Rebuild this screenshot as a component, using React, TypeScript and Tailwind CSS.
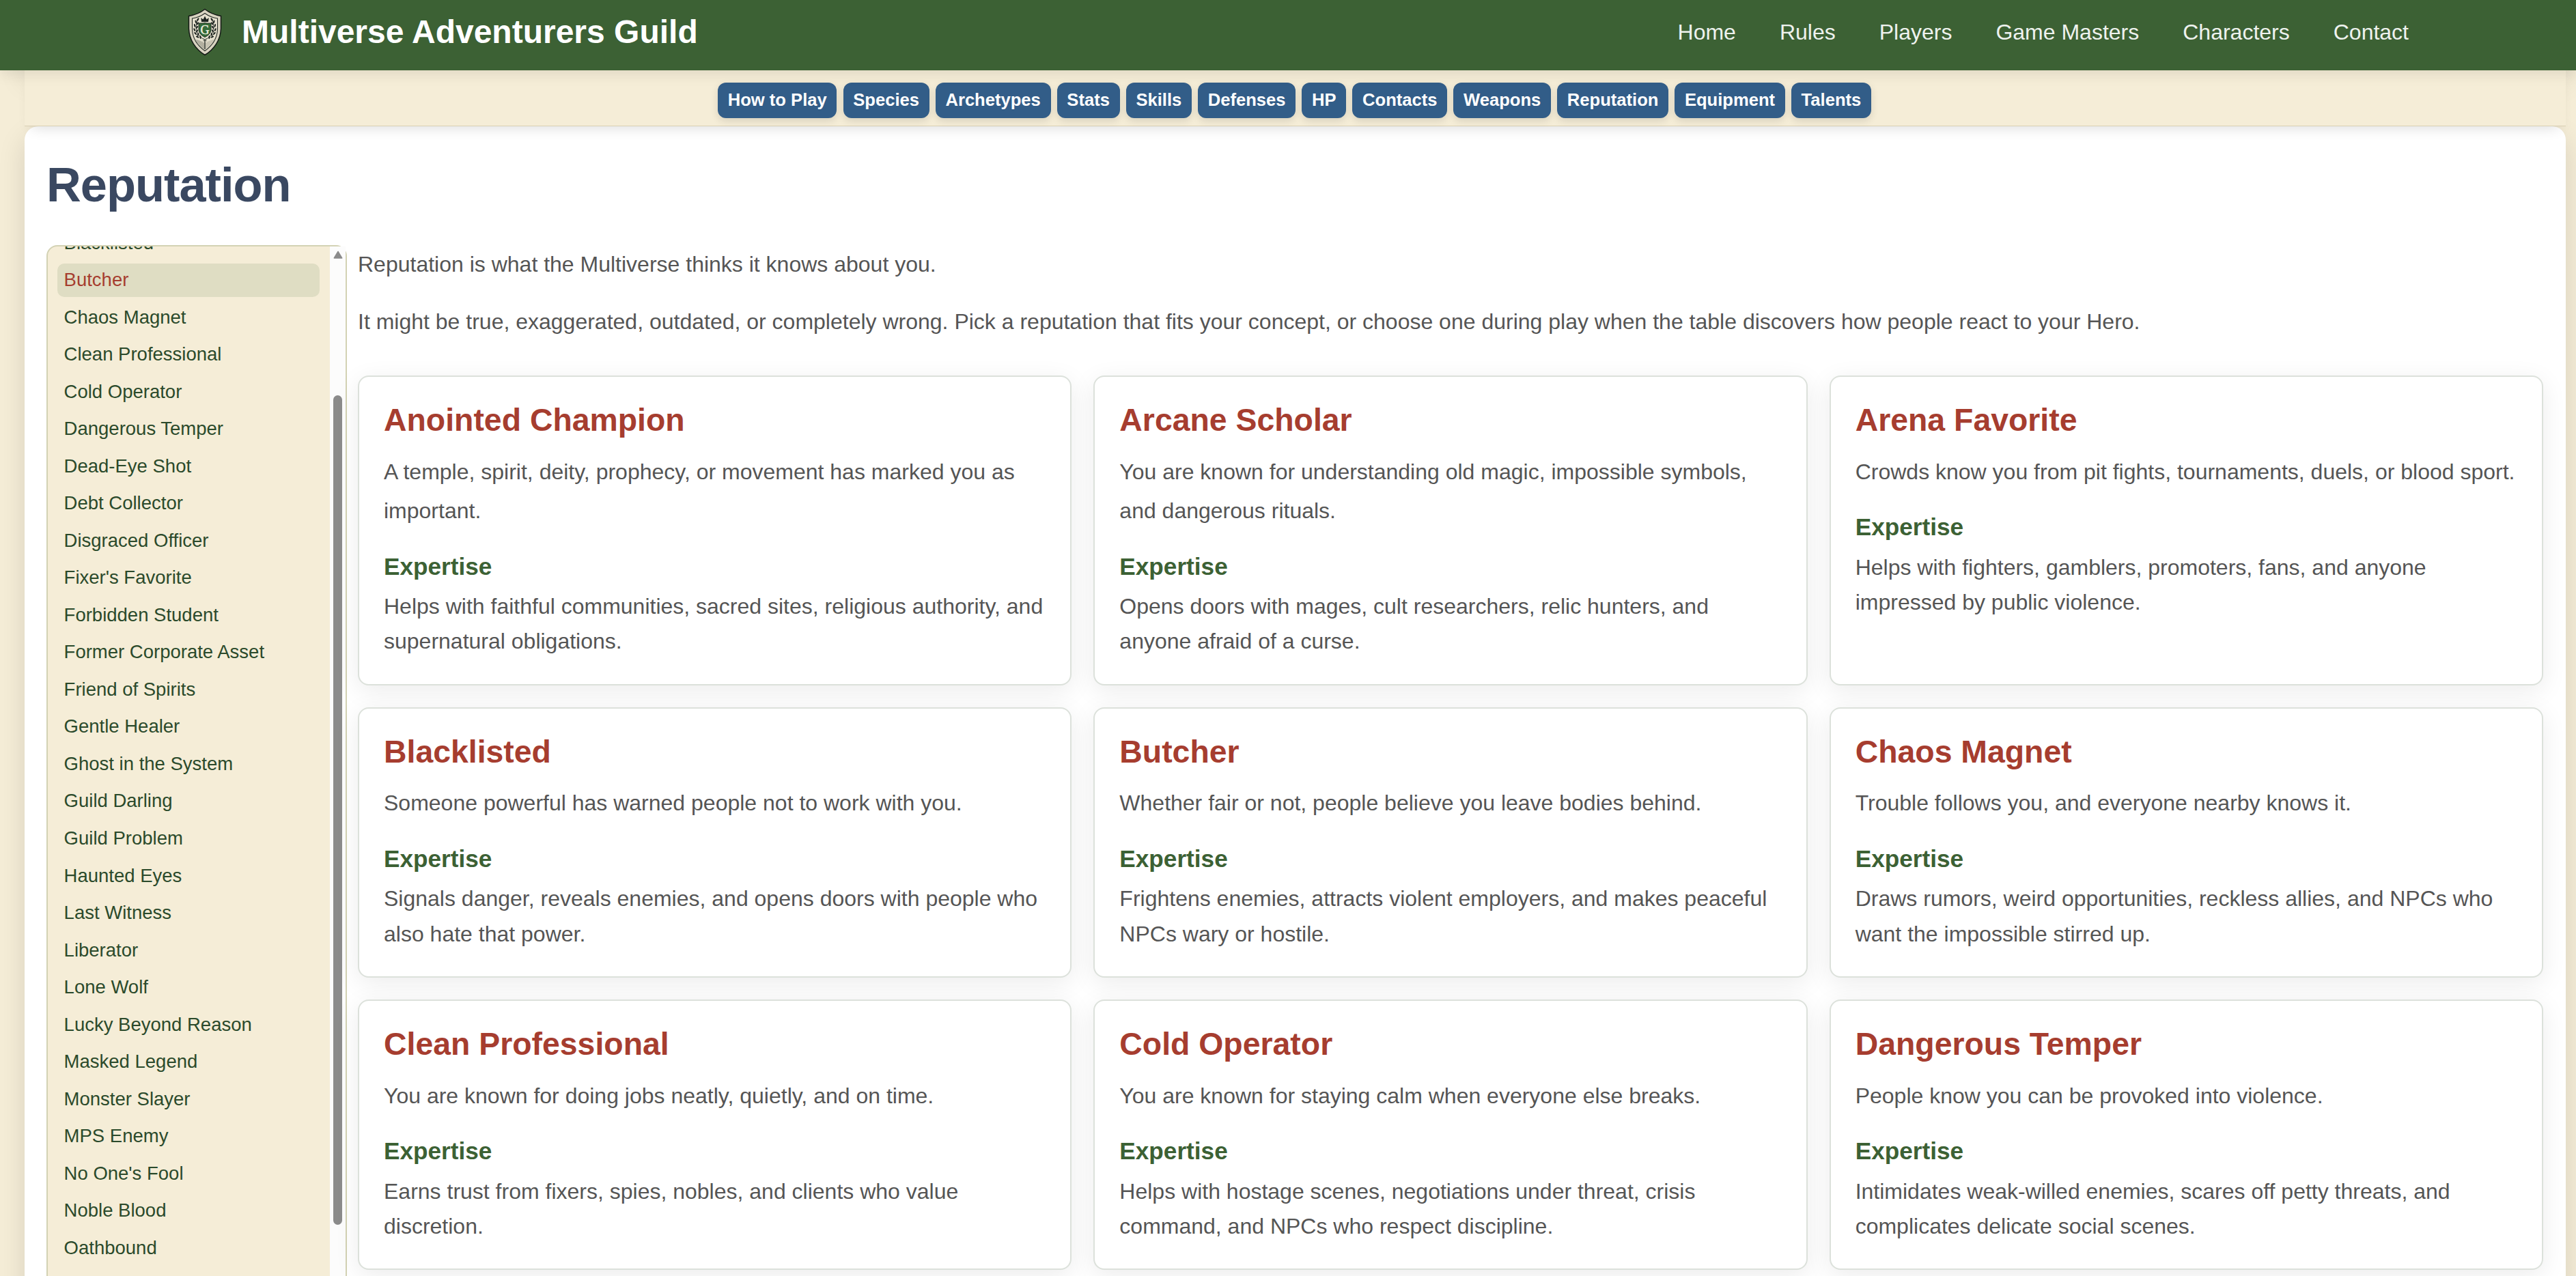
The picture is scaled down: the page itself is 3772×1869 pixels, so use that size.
const mainLinks = ['Home', 'Rules', 'Players', 'Game Masters', 'Characters', 'Contact'];

const ruleLinks = [
  'How to Play', 'Species', 'Archetypes', 'Stats', 'Skills', 'Defenses',
  'HP', 'Contacts', 'Weapons', 'Reputation', 'Equipment', 'Talents',
];

const sidebarLinks = [
  'Blacklisted', 'Butcher', 'Chaos Magnet', 'Clean Professional', 'Cold Operator', 'Dangerous Temper',
  'Dead-Eye Shot', 'Debt Collector', 'Disgraced Officer', "Fixer's Favorite", 'Forbidden Student',
  'Former Corporate Asset', 'Friend of Spirits', 'Gentle Healer', 'Ghost in the System', 'Guild Darling',
  'Guild Problem', 'Haunted Eyes', 'Last Witness', 'Liberator', 'Lone Wolf', 'Lucky Beyond Reason',
  'Masked Legend', 'Monster Slayer', 'MPS Enemy', "No One's Fool", 'Noble Blood', 'Oathbound',
];

const reputations = [
  {
    name: 'Anointed Champion',
    text: 'A temple, spirit, deity, prophecy, or movement has marked you as important.',
    expertise: 'Helps with faithful communities, sacred sites, religious authority, and supernatural obligations.',
  },
  {
    name: 'Arcane Scholar',
    text: 'You are known for understanding old magic, impossible symbols, and dangerous rituals.',
    expertise: 'Opens doors with mages, cult researchers, relic hunters, and anyone afraid of a curse.',
  },
  {
    name: 'Arena Favorite',
    text: 'Crowds know you from pit fights, tournaments, duels, or blood sport.',
    expertise: 'Helps with fighters, gamblers, promoters, fans, and anyone impressed by public violence.',
  },
  {
    name: 'Blacklisted',
    text: 'Someone powerful has warned people not to work with you.',
    expertise: 'Signals danger, reveals enemies, and opens doors with people who also hate that power.',
  },
  {
    name: 'Butcher',
    text: 'Whether fair or not, people believe you leave bodies behind.',
    expertise: 'Frightens enemies, attracts violent employers, and makes peaceful NPCs wary or hostile.',
  },
  {
    name: 'Chaos Magnet',
    text: 'Trouble follows you, and everyone nearby knows it.',
    expertise: 'Draws rumors, weird opportunities, reckless allies, and NPCs who want the impossible stirred up.',
  },
  {
    name: 'Clean Professional',
    text: 'You are known for doing jobs neatly, quietly, and on time.',
    expertise: 'Earns trust from fixers, spies, nobles, and clients who value discretion.',
  },
  {
    name: 'Cold Operator',
    text: 'You are known for staying calm when everyone else breaks.',
    expertise: 'Helps with hostage scenes, negotiations under threat, crisis command, and NPCs who respect discipline.',
  },
  {
    name: 'Dangerous Temper',
    text: 'People know you can be provoked into violence.',
    expertise: 'Intimidates weak-willed enemies, scares off petty threats, and complicates delicate social scenes.',
  },
];

// leaf positions of the left laurel branch, mirrored for the right one
const leaves = [
  { x: 29.8, y: 23.5, r: 35 },
  { x: 26.8, y: 27, r: -15 },
  { x: 29.3, y: 29.5, r: 40 },
  { x: 25.2, y: 32.5, r: -15 },
  { x: 28.4, y: 35, r: 40 },
  { x: 24.8, y: 38.5, r: -25 },
  { x: 28.4, y: 40.5, r: 30 },
  { x: 26.2, y: 44, r: -45 },
  { x: 30, y: 45.5, r: 15 },
  { x: 29.2, y: 49, r: -65 },
  { x: 33.5, y: 49.5, r: -10 },
];

function Branch() {
  return (
    <g fill="#1d2420">
      <path d="M30 23C25.5 33 25.5 44 38 52.5" fill="none" stroke="#1d2420" strokeWidth="0.8" />
      {leaves.map((l, i) => (
        <ellipse key={i} cx={l.x} cy={l.y} rx="1.15" ry="2.5" transform={`rotate(${l.r} ${l.x} ${l.y})`} />
      ))}
    </g>
  );
}

function Crest() {
  return (
    <svg viewBox="0 -5 80 93" className="w-20 h-[93px] shrink-0">
      <path
        d="M40 8.5C33 14 25 17 16.5 18.5V37C17 53 26 67 40 75.5C54 67 63 53 63.5 37V18.5C55 17 47 14 40 8.5Z"
        fill="#d8d3c0"
        stroke="#141a16"
        strokeWidth="1.5"
      />
      <path
        d="M40 14.5C34.5 18.5 28.5 21 21.5 22V38C22 51 29.5 62 40 69.5C50.5 62 58 51 58.5 38V22C51.5 21 45.5 18.5 40 14.5Z"
        fill="#e6e1cf"
        stroke="#252b27"
        strokeWidth="1.1"
      />
      <path d="M26 53C30 53 35 55 39.2 58V67.5C34 63.500 29.500 59 26 53Z" fill="#b3b0a0" />
      <path d="M54 53C50 53 45 55 40.800 58V67.5C46 63.500 50.500 59 54 53Z" fill="#c8c4b3" />
      <Branch />
      <g transform="translate(80 0) scale(-1 1)">
        <Branch />
      </g>
      <path d="M35 27L34.3 21L37.5 23.5L40 18.5L42.5 23.5L45.7 21L45 27Z" fill="#1d2420" />
      <path
        d="M31 29C35 29 38 29.3 40 28.3C42 29.3 45 29 49 29V38C49 43.5 45 47 40 49.5C35 47 31 43.5 31 38Z"
        fill="#356b38"
        stroke="#1d2420"
        strokeWidth="0.9"
      />
      <text
        x="40"
        y="44.7"
        textAnchor="middle"
        fontSize="18"
        fill="#f4f0e0"
        stroke="#f4f0e0"
        strokeWidth="0.4"
        className="font-['Liberation_Serif',serif]"
      >
        G
      </text>
      <path d="M37.5 51.5L42.5 55M42.5 51.5L37.5 55" stroke="#1d2420" strokeWidth="0.9" />
      <path d="M40 54V67" stroke="#1d2420" strokeWidth="1.3" />
    </svg>
  );
}

function Header() {
  return (
    <header className="relative z-20 h-[103px] shrink-0 bg-[#3c6134] pb-2.5 pl-[260px] pr-[245px] flex items-center justify-between shadow-[0_4px_20px_rgba(0,0,0,0.1)]">
      <div className="flex items-center gap-3.5">
        <Crest />
        <span className="text-white text-[48px] leading-none font-bold whitespace-nowrap">Multiverse Adventurers Guild</span>
      </div>
      <nav className="flex gap-16">
        {mainLinks.map((label) => (
          <a key={label} className="text-[32px] leading-none text-[#eef2ee] whitespace-nowrap">{label}</a>
        ))}
      </nav>
    </header>
  );
}

function RulesNav() {
  return (
    <nav className="relative z-10 h-[82px] shrink-0 ml-9 mr-[15px] bg-[#f5edd7] border-b border-[#d9d0b4] pt-[18px] pr-0.5 flex justify-center items-start gap-[9.1px] shadow-[0_12px_20px_-10px_rgba(0,0,0,0.14)]">
      {ruleLinks.map((label) => (
        <a
          key={label}
          className="h-[52px] px-[14.7px] rounded-xl bg-[#325d88] text-white text-[25.6px] leading-[50px] font-bold whitespace-nowrap shadow-[0_4px_12px_rgba(0,0,0,0.12)]"
        >
          {label}
        </a>
      ))}
    </nav>
  );
}

function Sidebar() {
  return (
    <aside className="w-[440px] h-[1560px] shrink-0 flex rounded-2xl border-2 border-[#d3d2b4] bg-[#f5edd7]">
      <div className="flex-1 overflow-hidden rounded-tl-[14px] pl-3.5 pr-[15px]">
        <ul className="-mt-[29.5px] flex flex-col gap-[5.54px]">
          {sidebarLinks.map((label) => (
            <li
              key={label}
              className={`h-[49px] shrink-0 rounded-[10px] px-[9.6px] text-[27.5px] leading-[48px] whitespace-nowrap ${
                label === 'Butcher' ? 'bg-[#dfddc3] text-[#a63d2f]' : 'text-[#2b4a2b]'
              }`}
            >
              {label}
            </li>
          ))}
        </ul>
      </div>
      {/* scrollbar */}
      <div className="w-[23px] shrink-0 bg-[#fcfcfc] flex flex-col items-center">
        <svg viewBox="0 0 14 12" className="mt-1.5 w-3.5 h-3">
          <path d="M7 1.5L12.7 11H1.3Z" fill="#8b8b8b" stroke="#8b8b8b" strokeWidth="1.5" strokeLinejoin="round" />
        </svg>
        <div className="mt-[200px] w-[13px] h-[1215px] rounded-full bg-[#8b8b8b]" />
      </div>
    </aside>
  );
}

function ReputationCard({ name, text, expertise }: (typeof reputations)[number]) {
  return (
    <article className="rounded-2xl border-2 border-[#dce1db] bg-white pt-[34px] pb-[36.3px] px-9 shadow-[0_8px_36px_rgba(0,0,0,0.08)]">
      <h2 className="text-[46.4px] leading-[58px] font-bold text-[#a63d2f]">{name}</h2>
      <p className="mt-[18.6px] text-[32px] leading-[57.6px] text-[#555]">{text}</p>
      <h3 className="mt-[30px] text-[35.2px] leading-[44px] font-bold text-[#3c6134]">Expertise</h3>
      <p className="mt-[11.4px] text-[32px] leading-[51.2px] text-[#555]">{expertise}</p>
    </article>
  );
}

export default function App() {
  return (
    <div className="h-[1869px] overflow-hidden flex flex-col bg-[#f5edd7] font-['Liberation_Sans',Arial,sans-serif]">
      <Header />
      {/* bottom edge of the banner that scrolled up behind the sticky nav */}
      <div className="h-10 -mt-10 shrink-0 ml-9 mr-[15px] shadow-[0_16px_40px_rgba(0,0,0,0.12)]" />
      <RulesNav />
      <main className="h-[1760px] shrink-0 ml-9 mr-[15px] bg-white rounded-t-[20px] pl-8 pr-[33px] pt-[46px] shadow-[0_16px_40px_rgba(0,0,0,0.12)]">
        <h1 className="text-[70.4px] leading-[80px] tracking-[-1px] font-bold text-[#3a4861]">Reputation</h1>
        <div className="mt-12 flex items-start gap-4">
          <Sidebar />
          <div className="flex-1 min-w-0">
            <div className="h-[191px] text-[32px] leading-[57.6px] text-[#555]">
              <p>Reputation is what the Multiverse thinks it knows about you.</p>
              <p className="mt-[26.8px]">
                It might be true, exaggerated, outdated, or completely wrong. Pick a reputation that fits your concept, or choose one during play when the table discovers how people react to your Hero.
              </p>
            </div>
            <div className="grid grid-cols-3 gap-8">
              {reputations.map((rep) => (
                <ReputationCard key={rep.name} {...rep} />
              ))}
            </div>
          </div>
        </div>
      </main>
    </div>
  );
}
